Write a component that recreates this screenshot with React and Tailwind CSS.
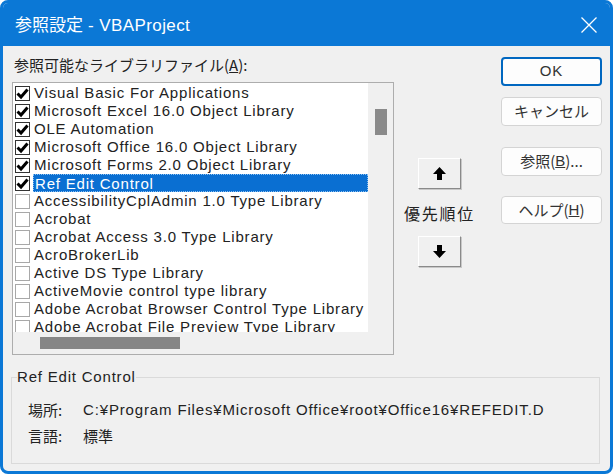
import { useState } from 'react';

const ui = { fontFamily: '"Liberation Sans", "Noto Sans CJK JP", sans-serif' };
const jp = { fontFamily: '"Noto Sans CJK JP", "Liberation Sans", sans-serif' };

const libraries = [
  { name: 'Visual Basic For Applications', checked: true },
  { name: 'Microsoft Excel 16.0 Object Library', checked: true },
  { name: 'OLE Automation', checked: true },
  { name: 'Microsoft Office 16.0 Object Library', checked: true },
  { name: 'Microsoft Forms 2.0 Object Library', checked: true },
  { name: 'Ref Edit Control', checked: true },
  { name: 'AccessibilityCplAdmin 1.0 Type Library', checked: false },
  { name: 'Acrobat', checked: false },
  { name: 'Acrobat Access 3.0 Type Library', checked: false },
  { name: 'AcroBrokerLib', checked: false },
  { name: 'Active DS Type Library', checked: false },
  { name: 'ActiveMovie control type library', checked: false },
  { name: 'Adobe Acrobat Browser Control Type Library', checked: false },
  { name: 'Adobe Acrobat File Preview Type Library', checked: false },
];

function CheckBox({ checked }) {
  return (
    <span
      className={
        'w-[15px] h-[15px] shrink-0 flex items-center justify-center bg-white border ' +
        (checked ? 'border-[#333]' : 'border-[#a8a8a8]')
      }
    >
      {checked && (
        <svg width="13" height="13" viewBox="0 0 13 13">
          <path d="M1.5 6.5 L5 10 L11.5 2.5" fill="none" stroke="#000" strokeWidth="3" strokeLinejoin="miter" />
        </svg>
      )}
    </span>
  );
}

function ArrowButton({ down }) {
  return (
    <button className="w-[43px] h-[31px] bg-[#f0f0f0] border border-t-white border-l-white border-r-[#8a8a8a] border-b-[#8a8a8a] shadow-[1px_1px_0_#c8c8c8] flex items-center justify-center">
      <svg width="13" height="13" viewBox="0 0 13 13" className={down ? 'rotate-180' : ''}>
        <polygon points="6.5,0 13,7 9,7 9,13 4,13 4,7 0,7" fill="#000" />
      </svg>
    </button>
  );
}

function DialogButton({ children, primary, className = '' }) {
  return (
    <button
      className={
        'w-[101px] rounded-[4px] bg-[#fdfdfd] text-[15px] text-[#333] flex items-center justify-center ' +
        (primary ? 'border-2 border-[#0067c0]' : 'border border-[#d4d4d4]') +
        ' ' +
        className
      }
      style={jp}
    >
      {children}
    </button>
  );
}

export default function App() {
  const [selected, setSelected] = useState(5);

  return (
    <div className="w-[613px] h-[474px] bg-white" style={ui}>
      <div className="w-[613px] h-[474px] flex flex-col rounded-[8px] border-[3px] border-[#0b78d6] overflow-hidden bg-[#f0f0f0]">
        {/* title bar */}
        <div className="h-[43px] shrink-0 bg-[#0b78d6] flex items-center pl-[12px] pr-[13px] text-white">
          <span className="text-[17px]" style={jp}>
            参照設定<span className="tracking-[0.4px]" style={ui}> - VBAProject</span>
          </span>
          <svg className="ml-auto" width="16" height="16" viewBox="0 0 16 16">
            <path d="M0.5 0.5 L15.5 15.5 M15.5 0.5 L0.5 15.5" stroke="#fff" strokeWidth="1.3" />
          </svg>
        </div>

        {/* body */}
        <div className="flex-1 flex flex-col">
          <div className="flex h-[309px] shrink-0">
            {/* library list */}
            <div className="ml-[9px] flex flex-col">
              <div className="h-[36px] pt-[9px] pl-[2px] leading-[20px] text-[15px] text-[#222]" style={jp}>
                参照可能なライブラリファイル(<span className="underline">A</span>):
              </div>
              <div className="w-[382px] h-[273px] border border-[#adadad] bg-[#f0f0f0] flex flex-col">
                <div className="flex h-[249px]">
                  <div className="w-[355px] bg-white overflow-hidden pt-[1px]">
                    {libraries.map((lib, i) => (
                      <div
                        key={lib.name}
                        onClick={() => setSelected(i)}
                        className="h-[18px] flex items-center pl-[2px] whitespace-nowrap text-[15px] tracking-[0.8px] text-[#222]"
                      >
                        <CheckBox checked={lib.checked} />
                        <span
                          className={
                            'ml-[3px] h-[18px] leading-[18px] flex-1 pl-[1px] ' +
                            (selected === i ? 'bg-[#0a6fd2] text-white border border-dotted border-[#8cc0f0] leading-[16px]' : '')
                          }
                        >
                          {lib.name}
                        </span>
                      </div>
                    ))}
                  </div>
                  {/* vertical scrollbar */}
                  <div className="flex-1 flex justify-center pt-[26px]">
                    <div className="w-[12px] h-[26px] bg-[#8a8a8a]" />
                  </div>
                </div>
                {/* horizontal scrollbar */}
                <div className="flex-1 pl-[27px] pt-[5px]">
                  <div className="w-[140px] h-[12px] bg-[#868686]" />
                </div>
              </div>
            </div>

            {/* priority arrows */}
            <div className="ml-[24px] w-[43px] flex flex-col items-center pt-[112px]">
              <ArrowButton />
              <div className="h-[47px] flex items-center whitespace-nowrap text-[16px] tracking-[1.8px] text-[#222]" style={jp}>
                優先順位
              </div>
              <ArrowButton down />
            </div>

            {/* dialog buttons */}
            <div className="ml-[40px] flex flex-col pt-[11px]">
              <DialogButton primary className="h-[29px]">
                <span className="tracking-[1px]" style={ui}>OK</span>
              </DialogButton>
              <DialogButton className="h-[29px] mt-[11px]">キャンセル</DialogButton>
              <DialogButton className="h-[29px] mt-[21px]">
                参照(<span className="underline" style={ui}>B</span>)...
              </DialogButton>
              <DialogButton className="h-[28px] mt-[20px]">
                ヘルプ(<span className="underline" style={ui}>H</span>)
              </DialogButton>
            </div>
          </div>

          {/* selected library info */}
          <fieldset className="ml-[8px] mr-[10px] mt-[12px] border border-[#dadada] pl-[5px] pb-[14px] text-[15px] text-[#222]">
            <legend className="leading-[20px] tracking-[0.8px]">Ref Edit Control</legend>
            <div className="mt-[10px] pl-[11px] flex flex-col">
              <div className="h-[26px] flex items-center">
                <span className="w-[55px]" style={jp}>場所:</span>
                <span className="whitespace-nowrap tracking-[0.85px]">C:¥Program Files¥Microsoft Office¥root¥Office16¥REFEDIT.D</span>
              </div>
              <div className="h-[26px] flex items-center">
                <span className="w-[55px]" style={jp}>言語:</span>
                <span style={jp}>標準</span>
              </div>
            </div>
          </fieldset>
        </div>
      </div>
    </div>
  );
}
